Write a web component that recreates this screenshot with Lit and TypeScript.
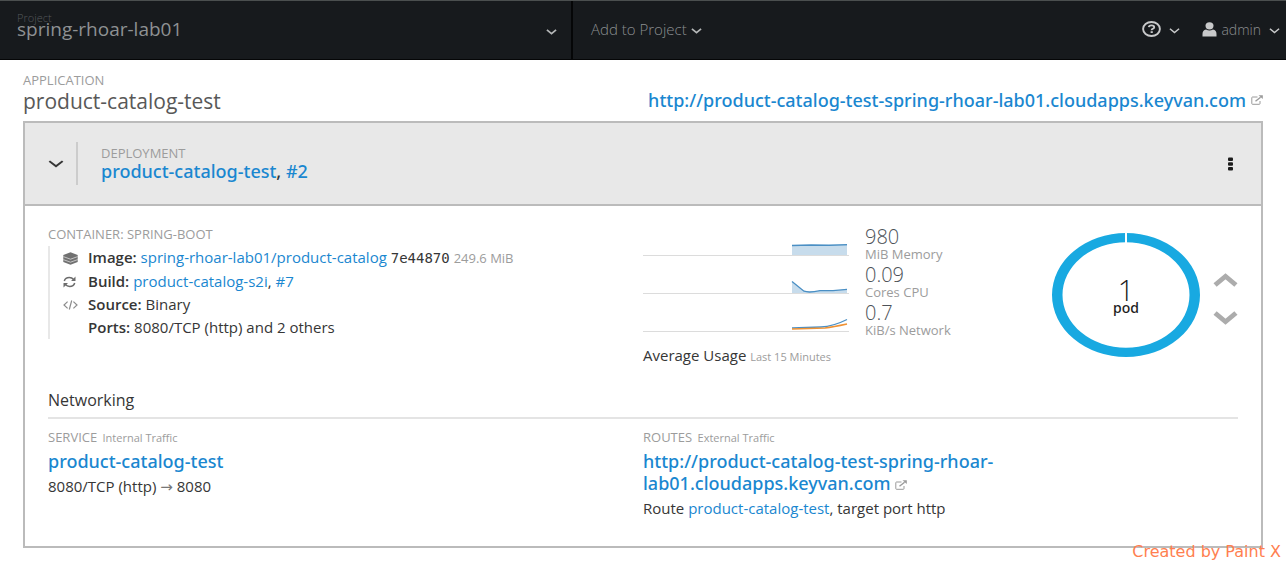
import { LitElement, html, svg, css } from "lit";
import { customElement } from "lit/decorators.js";

const chevron = (w: number, h: number, stroke: number) => html`
  <svg width=${w} height=${h} viewBox="0 0 12 7" preserveAspectRatio="none" fill="none" stroke="currentColor" stroke-width=${stroke} aria-hidden="true">
    <path d="M1 1 L6 5.4 L11 1" />
  </svg>`;

const external = html`
  <svg class="ext" width="12" height="10" viewBox="0 0 12 10" fill="none" stroke="currentColor" aria-hidden="true">
    <path d="M6.5 2 H1.5 Q0.8 2 0.8 2.7 V8.6 Q0.8 9.3 1.5 9.3 H8.3 Q9 9.3 9 8.6 V6" />
    <path d="M4.5 6.3 L9.6 2.2" stroke-width="1.4" />
    <path d="M7.5 0.2 H11.8 V4 Z" fill="currentColor" stroke="none" />
  </svg>`;

@customElement("usage-metric")
export class UsageMetric extends LitElement {
  static properties = { value: {}, unit: {}, kind: {} };
  declare value: string;
  declare unit: string;
  declare kind: string;

  static styles = css`
    :host { display: flex; gap: 16px; height: 38px; }
    svg { display: block; flex: none; }
    .value { font-size: 20px; line-height: 21px; color: #4d5258; font-weight: 300; }
    .unit { font-size: 13px; line-height: 15px; color: #9c9c9c; white-space: nowrap; }
  `;

  private shape() {
    if (this.kind === "memory") {
      return svg`
        <path d="M149 19.5 H204 V29 H149 Z" fill="#c7dcec" />
        <path d="M149 19.4 L168 19 L186 19.2 L204 18.8" fill="none" stroke="#4a8fc4" stroke-width="1.5" />`;
    }
    if (this.kind === "cpu") {
      return svg`
        <path d="M149 17.5 L161 27.2 Q166 29 177 26.7 L190 26.7 L204 25.3 V29 H149 Z" fill="#c7dcec" />
        <path d="M149 17.5 L161 27.2 Q166 29 177 26.7 L190 26.7 L204 25.3" fill="none" stroke="#4a8fc4" stroke-width="1.3" />`;
    }
    return svg`
      <path d="M149 26 L178 25 Q190 24.5 204 17.5" fill="none" stroke="#4a8fc4" stroke-width="1.3" />
      <path d="M149 27 L182 26 Q190 25 204 22" fill="none" stroke="#ef9234" stroke-width="1.5" />`;
  }

  render() {
    return html`
      <svg width="206" height="38" viewBox="0 0 206 38" aria-hidden="true">
        <path d="M0 29.5 H206" stroke="#dcdcdc" />
        ${this.shape()}
      </svg>
      <div>
        <div class="value">${this.value}</div>
        <div class="unit">${this.unit}</div>
      </div>`;
  }
}

@customElement("app-root")
export class AppRoot extends LitElement {
  static styles = css`
    :host {
      display: block;
      position: relative;
      font-family: "Open Sans", "Noto Sans", sans-serif;
      font-size: 15px;
      line-height: 23px;
      color: #363636;
    }
    * { box-sizing: border-box; }
    a { color: #1a87d0; text-decoration: none; }
    button { font: inherit; color: inherit; background: none; border: 0; padding: 0; cursor: pointer; }
    svg { flex: none; }
    h1, h2, h3, p, ul { margin: 0; padding: 0; font-weight: 400; list-style: none; }

    .topbar {
      display: flex;
      height: 60px;
      background: #171a1d;
      border-top: 1px solid #4b4f4f;
      border-bottom: 1px solid #050607;
      color: #a2a5a7;
      font-weight: 300;
    }
    .topbar button { display: flex; align-items: center; }
    .topbar .project {
      flex: 0 0 573px;
      justify-content: space-between;
      padding: 0 14px 0 17px;
      border-right: 2px solid #050607;
      text-align: left;
    }
    .names { display: flex; flex-direction: column; padding-bottom: 10px; }
    .names small { font-size: 11px; line-height: 8px; color: #55595c; }
    .names span { font-size: 19px; line-height: 15px; font-weight: 400; color: #8e9193; }
    .topbar .add { gap: 4px; padding-left: 18px; font-size: 15px; color: #8b8e90; }
    .topbar .add, .tools button { padding-bottom: 2px; }
    .topbar svg { color: #b4b6b7; }
    .tools { margin-left: auto; display: flex; gap: 22px; padding-right: 6px; font-size: 14px; }
    .tools button { gap: 8px; color: #8b8e90; }
    .tools .user { gap: 4px; }
    .tools .user .arrow { margin-left: 4px; }
    .arrow { display: flex; margin-top: 4px; }
    .tools svg { color: #c8c9ca; }

    main { padding: 11px 23px 18px; }
    .label { font-size: 13px; line-height: 18px; color: #9c9c9c; text-transform: uppercase; }
    .label small { font-size: 11px; text-transform: none; margin-left: 2px; }
    .apphead { display: flex; justify-content: space-between; align-items: flex-end; padding-bottom: 8px; }
    .apphead h1 { font-size: 21px; line-height: 24px; color: #585858; }
    .link, .who h2 { font-family: "Noto Sans", "Open Sans", sans-serif; font-size: 18px; line-height: 22px; font-weight: 500; }
    .ext { color: #9a9a9a; }
    .apphead .link { display: flex; align-items: center; gap: 5px; line-height: 26px; }

    .card { border: 2px solid #bbb; }
    .cardhead {
      display: flex;
      align-items: center;
      height: 83px;
      padding: 0 27px 0 23px;
      background: #e8e8e8;
      border-bottom: 2px solid #bbb;
    }
    .toggle { display: flex; align-items: center; height: 43px; width: 28px; }
    .who { border-left: 2px solid #ccc; padding-left: 23px; height: 43px; padding-top: 2px; }
    .who h2 { line-height: 18px; }
    .kebab { display: flex; margin-left: auto; color: #1c1c1c; }

    .body { padding: 19px 23px 26px; }
    .cols { display: grid; grid-template-columns: 1fr 1fr; }
    .facts { border-left: 2px solid #e8e8e8; margin-top: 3px; padding-left: 13px; }
    .facts li { display: grid; grid-template-columns: 16px 1fr; gap: 9px; align-items: center; white-space: nowrap; }
    .facts svg { display: block; }
    .facts b { font-weight: 600; }
    .hash { font-family: "DejaVu Sans Mono", monospace; font-size: 14px; }
    .size { font-size: 13px; color: #9c9c9c; }
    .usage { display: flex; justify-content: space-between; }
    .metrics { display: flex; flex-direction: column; padding-top: 1px; }
    .avg { margin-top: 4px; }
    .avg small { font-size: 11px; color: #9c9c9c; }
    .scale { display: flex; align-items: center; gap: 13px; height: 124px; margin-top: 8px; }
    .donut { display: grid; place-items: center; }
    .donut > * { grid-area: 1 / 1; }
    .count { text-align: center; color: #1c1c1c; padding-top: 3px; }
    .count strong { display: block; font-size: 29px; line-height: 22px; font-weight: 300; }
    .count span { display: block; font-family: "Noto Sans", sans-serif; font-size: 14px; line-height: 14px; font-weight: 500; }
    .steps { display: flex; flex-direction: column; gap: 24px; color: #acacac; padding-top: 8px; }
    .steps button { display: flex; }
    .up { transform: rotate(180deg); }

    .net { font-size: 16px; margin-top: 21px; padding-bottom: 5px; border-bottom: 2px solid #e4e4e4; margin-bottom: 9px; }
    .cols .link { margin: 3px 0; }
    .route { max-width: 370px; }
    .to { font-family: "DejaVu Sans", sans-serif; color: #777; }

    .mark {
      position: absolute;
      right: 5px;
      bottom: 4px;
      font-family: "DejaVu Sans", sans-serif;
      font-size: 16px;
      line-height: 20px;
      color: #ff7f50;
    }
  `;

  render() {
    return html`
      <header class="topbar">
        <button class="project">
          <span class="names"><small>Project</small><span>spring-rhoar-lab01</span></span>
          <span class="arrow">${chevron(11, 6, 1.8)}</span>
        </button>
        <button class="add">Add to Project <span class="arrow">${chevron(11, 6, 1.8)}</span></button>
        <div class="tools">
          <button aria-label="Help">
            <svg width="19" height="16" viewBox="0 0 19 16" fill="none" stroke="currentColor">
              <ellipse cx="9.5" cy="8" rx="8.4" ry="7" stroke-width="1.9" />
              <path d="M6.8 6.2 Q7 4.4 9.5 4.4 Q12.2 4.4 12.2 6.2 Q12.2 7.3 10.6 7.9 Q9.6 8.3 9.6 9.3" stroke-width="1.9" />
              <path d="M8.6 10.2 H10.8 V12 H8.6 Z" fill="currentColor" stroke="none" />
            </svg>
            <span class="arrow">${chevron(11, 6, 1.6)}</span>
          </button>
          <button class="user">
            <svg width="15" height="15" viewBox="0 0 15 15" fill="currentColor" aria-hidden="true">
              <ellipse cx="7.5" cy="3.8" rx="4" ry="3.6" />
              <path d="M0.5 14.5 V12 Q0.5 8.2 4 7.6 Q7.5 9.4 11 7.6 Q14.5 8.2 14.5 12 V14.5 Z" />
            </svg>
            admin
            <span class="arrow">${chevron(11, 6, 1.6)}</span>
          </button>
        </div>
      </header>

      <main>
        <div class="apphead">
          <div>
            <div class="label">Application</div>
            <h1>product-catalog-test</h1>
          </div>
          <a class="link" href="#app">http://product-catalog-test-spring-rhoar-lab01.cloudapps.keyvan.com ${external}</a>
        </div>

        <section class="card">
          <div class="cardhead">
            <button class="toggle" aria-label="Collapse">${chevron(16, 8, 1.6)}</button>
            <div class="who">
              <div class="label">Deployment</div>
              <h2><a href="#dep">product-catalog-test</a>, <a href="#rev">#2</a></h2>
            </div>
            <button class="kebab" aria-label="Actions">
              <svg width="7" height="14" viewBox="0 0 7 14" fill="currentColor">
                <rect x="1" y="0.5" width="5" height="3.6" rx="1" />
                <rect x="1" y="5.2" width="5" height="3.6" rx="1" />
                <rect x="1" y="9.9" width="5" height="3.6" rx="1" />
              </svg>
            </button>
          </div>

          <div class="body">
            <div class="cols">
              <div>
                <div class="label">Container: spring-boot</div>
                <ul class="facts">
                  <li>
                    <svg width="15" height="13" viewBox="0 0 15 13" aria-hidden="true">
                      <path d="M0.3 3 L7.5 0.2 L14.7 3 V10 L7.5 12.8 L0.3 10 Z" fill="#717171" />
                      <path d="M0.3 4.6 L7.5 7.2 L14.7 4.6 M0.3 7.6 L7.5 10.2 L14.7 7.6" fill="none" stroke="#d8d8d8" stroke-width="0.8" />
                    </svg>
                    <span><b>Image:</b> <a href="#image">spring-rhoar-lab01/product-catalog</a> <span class="hash">7e44870</span> <span class="size">249.6 MiB</span></span>
                  </li>
                  <li>
                    <svg width="13" height="12" viewBox="0 0 13 12" fill="none" stroke="#6c6c6c" stroke-width="1.5" aria-hidden="true">
                      <path d="M1.3 5 Q2.3 1.6 6.3 1.6 Q9 1.6 10.6 3.4 M11.7 7 Q10.7 10.4 6.7 10.4 Q4 10.4 2.4 8.6" />
                      <path d="M12.5 0.6 V5 H8 Z M0.5 11.4 V7 H5 Z" fill="#6c6c6c" stroke="none" />
                    </svg>
                    <span><b>Build:</b> <a href="#build">product-catalog-s2i</a>, <a href="#b7">#7</a></span>
                  </li>
                  <li>
                    <svg width="15" height="10" viewBox="0 0 15 10" fill="none" stroke="#8c8c8c" stroke-width="1.2" aria-hidden="true">
                      <path d="M4.6 1.6 L1 5 L4.6 8.4 M10.4 1.6 L14 5 L10.4 8.4 M8.7 0.5 L6.3 9.5" />
                    </svg>
                    <span><b>Source:</b> Binary</span>
                  </li>
                  <li><span></span><span><b>Ports:</b> 8080/TCP (http) and 2 others</span></li>
                </ul>
              </div>

              <div class="usage">
                <div class="metrics">
                  <usage-metric value="980" unit="MiB Memory" kind="memory"></usage-metric>
                  <usage-metric value="0.09" unit="Cores CPU" kind="cpu"></usage-metric>
                  <usage-metric value="0.7" unit="KiB/s Network" kind="network"></usage-metric>
                  <p class="avg">Average Usage <small>Last 15 Minutes</small></p>
                </div>
                <div class="scale">
                  <div class="donut">
                    <svg width="148" height="124" viewBox="0 0 148 124" aria-hidden="true">
                      <path fill-rule="evenodd" fill="#18a9e1" d="M0 62 A74 62 0 1 1 148 62 A74 62 0 1 1 0 62 Z M10.5 62 A63.5 52.8 0 1 0 137.5 62 A63.5 52.8 0 1 0 10.5 62 Z" />
                      <path d="M74 0 V10" stroke="#fff" stroke-width="2" />
                    </svg>
                    <div class="count"><strong>1</strong><span>pod</span></div>
                  </div>
                  <div class="steps">
                    <button class="up" aria-label="Scale up">${chevron(25, 14, 2.3)}</button>
                    <button aria-label="Scale down">${chevron(25, 14, 2.3)}</button>
                  </div>
                </div>
              </div>
            </div>

            <h3 class="net">Networking</h3>
            <div class="cols">
              <div>
                <div class="label">Service <small>Internal Traffic</small></div>
                <p class="link"><a href="#svc">product-catalog-test</a></p>
                <p>8080/TCP (http) <span class="to">→</span> 8080</p>
              </div>
              <div>
                <div class="label">Routes <small>External Traffic</small></div>
                <p class="link route"><a href="#route">http://product-catalog-test-spring-rhoar-lab01.cloudapps.keyvan.com ${external}</a></p>
                <p>Route <a href="#r">product-catalog-test</a>, target port http</p>
              </div>
            </div>
          </div>
        </section>
      </main>
      <div class="mark">Created by Paint X</div>`;
  }
}
